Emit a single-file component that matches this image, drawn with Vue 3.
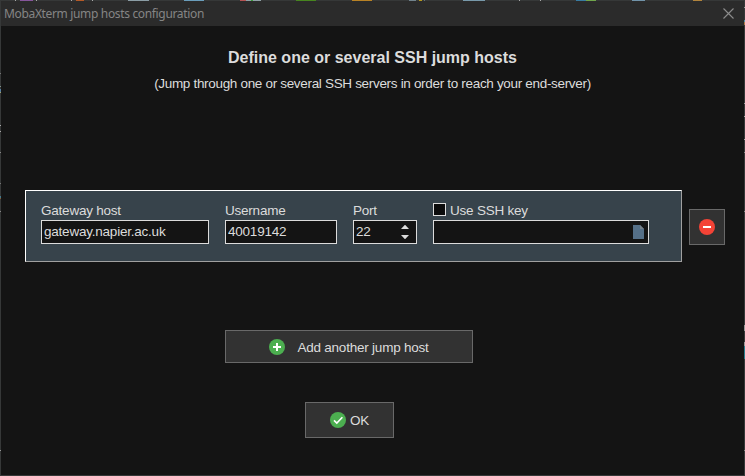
<script setup>
import { ref } from 'vue'

const host = ref('gateway.napier.ac.uk')
const user = ref('40019142')
const port = ref('22')
const useKey = ref(false)
const keyFile = ref('')
</script>

<template>
  <div class="dialog">
    <header class="titlebar">
      <span class="caption">MobaXterm jump hosts configuration</span>
      <svg class="close" width="11" height="11" viewBox="0 0 11 11">
        <path d="M.5 .5 10.5 10.5M10.5 .5 .5 10.5" stroke="#8c8c8c" stroke-width="1.1" fill="none" />
      </svg>
    </header>

    <main class="content">
      <h1>Define one or several SSH jump hosts</h1>
      <p class="subtitle">(Jump through one or several SSH servers in order to reach your end-server)</p>

      <div class="host-row">
        <section class="panel">
          <div class="field host">
            <label>Gateway host</label>
            <div class="box"><input v-model="host" /></div>
          </div>
          <div class="field user">
            <label>Username</label>
            <div class="box"><input v-model="user" /></div>
          </div>
          <div class="field port">
            <label>Port</label>
            <div class="box">
              <input v-model="port" />
              <svg class="spinner" width="8" height="14" viewBox="0 0 8 14">
                <path d="M0 4 4-.3 8 4zM0 10h8L4 14.3z" fill="#dcdcdc" />
              </svg>
            </div>
          </div>
          <div class="field key">
            <label class="check">
              <span class="checkbox" @click="useKey = !useKey"></span>
              <span>Use SSH key</span>
            </label>
            <div class="box">
              <input v-model="keyFile" />
              <svg class="file" width="11" height="14" viewBox="0 0 11 14">
                <path d="M0 0h7l4 4v10H0z" fill="#557088" />
                <path d="M7 0l4 4H7z" fill="#77818a" />
              </svg>
            </div>
          </div>
        </section>
        <button class="btn remove">
          <svg width="16" height="16" viewBox="0 0 16 16">
            <circle cx="8" cy="8" r="8" fill="#f44336" />
            <path d="M4 7h8v2H4z" fill="#fff" />
          </svg>
        </button>
      </div>

      <button class="btn add">
        <svg width="16" height="16" viewBox="0 0 16 16">
          <circle cx="8" cy="8" r="8" fill="#4caf50" />
          <path d="M7 4h2v3h3v2H9v3H7V9H4V7h3z" fill="#fff" />
        </svg>
        <span>Add another jump host</span>
      </button>

      <button class="btn ok">
        <svg width="16" height="16" viewBox="0 0 16 16">
          <circle cx="8" cy="8" r="8" fill="#4caf50" />
          <path d="M4 8.3 6.8 11 12.4 5.2" stroke="#fff" stroke-width="1.6" fill="none" />
        </svg>
        <span>OK</span>
      </button>
    </main>
  </div>
</template>

<style>
body {
  background: #141414;
  overflow: hidden;
}
</style>

<style scoped>
* {
  box-sizing: border-box;
}
.dialog {
  width: 745px;
  height: 476px;
  padding: 1px;
  font: 13.5px/16px "Liberation Sans", Arial, sans-serif;
  letter-spacing: -0.22px;
  color: #dcdcdc;
  /* one-pixel window frame with the desktop showing at its edges */
  background:
    linear-gradient(90deg, transparent 15px, #a7a7a7 15px 16px, transparent 16px 20px, #86569b 20px 33px, transparent 33px 36px, #aaa 36px 37px, transparent 37px 71px, #aaa 71px 72px, transparent 72px 76px, #b45a28 76px 84px, transparent 84px 92px, #aaa 92px 93px, transparent 93px 128px, #8b9da5 128px 149px, transparent 149px 184px, #6a9dbb 184px 204px, transparent 204px 240px, #b65353 240px 246px, #91a2a7 246px 251px, #3d9d3c 251px 253px, #91a2a7 253px 261px, transparent 261px 296px, #47851f 296px 316px, transparent 316px 352px, #b88225 352px 372px, transparent 372px 409px, #71838d 409px 416px, transparent 416px 419px, #b69a20 419px 422px, transparent 422px 424px, #61717b 424px 425px, transparent 425px 463px, #7899aa 463px 485px, transparent 485px 519px, #aaa 519px 520px, transparent 520px 540px, #aaa 540px 541px, transparent 541px 576px, #397ca2 576px 586px, #70a64c 586px 596px, transparent 596px 632px, #7193a9 632px 645px, transparent 645px 693px, #b1843d 693px 702px, transparent 702px) 0 0 / 745px 1px no-repeat,
    linear-gradient(transparent 73px, #777 73px 74px, transparent 74px 86px, #80928b 86px 87px, transparent 87px 89px, #557da0 89px 92px, #a0a16e 92px 93px, transparent 93px 125px, #aaa 125px 126px, transparent 126px 131px, #aaa 131px 132px, transparent 132px 152px, #888 152px 153px, transparent 153px 183px, #777 183px 184px, transparent 184px 196px, #46798b 196px 198px, #855c35 198px 199px, transparent 199px 211px, #888 211px 212px, transparent 212px 450px, #999 450px 451px, transparent 451px) 0 0 / 1px 476px no-repeat,
    linear-gradient(transparent 7px, #999 7px 8px, transparent 8px 20px, #4f8fa7 20px 22px, #a97947 22px 25px, transparent 25px 103px, #999 103px 104px, transparent 104px 116px, #aaa 116px 117px, transparent 117px 139px, #aaa 139px 140px, transparent 140px 152px, #888 152px 153px, transparent 153px 211px, #888 211px 212px, transparent 212px 325px, #999 325px 331px, transparent 331px 342px, #999 342px 346px, #287e8d 346px 359px, transparent 359px 450px, #888 450px 451px, transparent 451px) 744px 0 / 1px 476px no-repeat,
    #363838;
}
.titlebar {
  height: 25px;
  display: flex;
  justify-content: space-between;
  padding: 4px 10px 0 3px;
  background: #2b2b2b;
}
.caption {
  font: 12px/17px "Noto Sans", "Open Sans", sans-serif;
  color: #858585;
  letter-spacing: -0.34px;
}
.close {
  margin-top: 3px;
}
.content {
  height: 449px;
  padding-top: 22px;
  background: #141414;
}
h1 {
  margin: 0;
  font-size: 16px;
  line-height: 20px;
  letter-spacing: 0;
  text-align: center;
  white-space: nowrap;
}
.subtitle {
  margin: 7px 0 0;
  line-height: 18px;
  letter-spacing: -0.32px;
  text-align: center;
  white-space: nowrap;
}
.host-row {
  display: flex;
  align-items: center;
  gap: 7px;
  margin: 97px 0 0 24px;
}
.panel {
  width: 657px;
  height: 72px;
  display: flex;
  gap: 16px;
  padding: 11px 15px 0;
  background: #37434b;
  border: 1px solid;
  border-color: #fff #a0a0a0 #a0a0a0 #fff;
}
.field {
  display: flex;
  flex-direction: column;
}
.field label {
  height: 18px;
  line-height: 17px;
}
.host { width: 168px; }
.user { width: 112px; }
.port { width: 64px; }
.key { width: 216px; }
.box {
  height: 24px;
  display: flex;
  align-items: center;
  background: #141414;
  border: 1px solid #dcdcdc;
}
input {
  flex: 1;
  min-width: 0;
  height: 20px;
  padding: 0 0 2px 2px;
  border: 0;
  outline: 0;
  background: none;
  color: inherit;
  font: inherit;
  letter-spacing: inherit;
}
.spinner {
  margin-right: 7px;
}
.file {
  margin-right: 4px;
}
.check {
  display: flex;
  gap: 4px;
}
.checkbox {
  width: 13px;
  height: 13px;
  margin-top: 1px;
  background: #0c0c0c;
  border: 1px solid #dcdcdc;
}
.btn {
  display: flex;
  align-items: center;
  justify-content: center;
  padding: 0;
  background: #323232;
  border: 1px solid #696969;
  border-radius: 0;
  color: inherit;
  font: inherit;
  letter-spacing: inherit;
}
.btn span {
  padding-top: 2px;
}
.remove {
  width: 36px;
  height: 36px;
  margin-top: 2px;
}
.add {
  width: 248px;
  height: 33px;
  gap: 12px;
  margin: 68px 0 0 224px;
}
.ok {
  width: 89px;
  height: 36px;
  gap: 4px;
  margin: 39px 0 0 304px;
}
</style>
